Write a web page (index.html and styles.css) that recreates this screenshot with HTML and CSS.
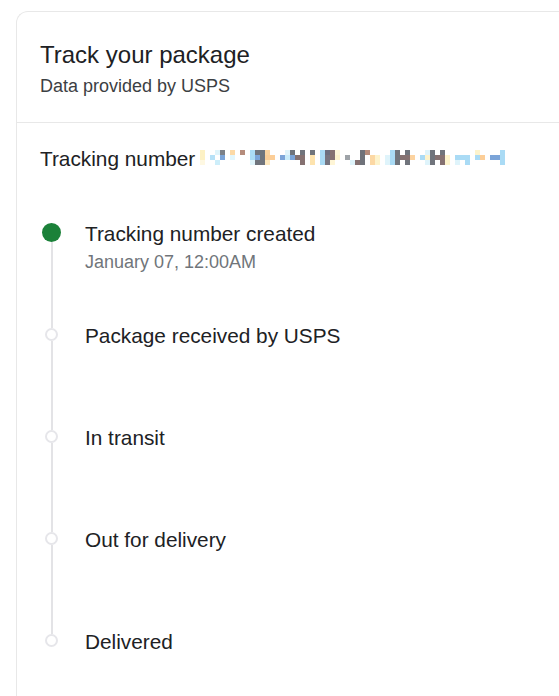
FILE: index.html
```html
<!DOCTYPE html>
<html lang="en">
<head>
<meta charset="utf-8">
<title>Track your package</title>
<link rel="stylesheet" href="styles.css">
</head>
<body>
<div class="card">
  <div class="card-header">
    <h1 class="title">Track your package</h1>
    <p class="subtitle">Data provided by USPS</p>
  </div>
  <div class="card-body">
    <div class="tracking">Tracking number<svg class="redacted" width="310" height="15" viewBox="0 0 310 15" aria-hidden="true">
      <g>
        <rect x="1" y="0" width="5" height="10" fill="#fdf1c4"/>
        <rect x="1" y="10" width="5" height="5" fill="#fef8e2"/>
        <rect x="11" y="5" width="5" height="5" fill="#b6e1f7"/>
        <rect x="16" y="0" width="5" height="5" fill="#dff4fb"/>
        <rect x="16" y="10" width="5" height="5" fill="#cdeefa"/>
        <rect x="21" y="0" width="5" height="5" fill="#7b8088"/>
        <rect x="21" y="5" width="5" height="5" fill="#7ba4d8"/>
        <rect x="31" y="0" width="5" height="5" fill="#fcd9a6"/>
        <rect x="31" y="5" width="5" height="5" fill="#e2f6fc"/>
        <rect x="41" y="0" width="5" height="5" fill="#b58c7c"/>
        <rect x="51" y="0" width="5" height="5" fill="#aadbf5"/>
        <rect x="51" y="5" width="5" height="5" fill="#aadbf5"/>
        <rect x="51" y="10" width="5" height="5" fill="#dff4fb"/>
        <rect x="56" y="0" width="10" height="5" fill="#70747c"/>
        <rect x="56" y="5" width="5" height="5" fill="#7ba4d8"/>
        <rect x="61" y="5" width="5" height="5" fill="#70747c"/>
        <rect x="56" y="10" width="10" height="5" fill="#70747c"/>
        <rect x="66" y="0" width="5" height="5" fill="#fcd3a0"/>
        <rect x="66" y="5" width="10" height="5" fill="#fcce98"/>
        <rect x="66" y="10" width="5" height="5" fill="#fde8bf"/>
        <rect x="81" y="5" width="5" height="5" fill="#7ba4d8"/>
        <rect x="86" y="0" width="5" height="5" fill="#dff4fb"/>
        <rect x="86" y="5" width="5" height="5" fill="#c9ecfa"/>
        <rect x="91" y="0" width="5" height="5" fill="#70747c"/>
        <rect x="91" y="5" width="5" height="5" fill="#7ba4d8"/>
        <rect x="96" y="5" width="5" height="5" fill="#857171"/>
        <rect x="101" y="0" width="5" height="5" fill="#70747c"/>
        <rect x="101" y="5" width="5" height="10" fill="#857171"/>
        <rect x="111" y="0" width="5" height="5" fill="#70747c"/>
        <rect x="111" y="5" width="5" height="10" fill="#fde3ae"/>
        <rect x="121" y="0" width="5" height="5" fill="#aadbf5"/>
        <rect x="121" y="5" width="5" height="10" fill="#aadbf5"/>
        <rect x="126" y="0" width="5" height="5" fill="#6d6f7f"/>
        <rect x="126" y="5" width="5" height="10" fill="#777580"/>
        <rect x="131" y="0" width="5" height="10" fill="#857171"/>
        <rect x="131" y="10" width="5" height="5" fill="#fef5d6"/>
        <rect x="136" y="0" width="5" height="5" fill="#fdf6d9"/>
        <rect x="136" y="5" width="5" height="5" fill="#fdf3cc"/>
        <rect x="146" y="5" width="5" height="5" fill="#9ea3a8"/>
        <rect x="151" y="10" width="5" height="5" fill="#dff4fb"/>
        <rect x="156" y="10" width="5" height="5" fill="#857171"/>
        <rect x="161" y="0" width="5" height="5" fill="#6f727a"/>
        <rect x="166" y="0" width="5" height="5" fill="#b58c7c"/>
        <rect x="161" y="5" width="5" height="10" fill="#6f727a"/>
        <rect x="171" y="5" width="5" height="10" fill="#fcd8a4"/>
        <rect x="176" y="5" width="5" height="10" fill="#fdf3cc"/>
        <rect x="186" y="5" width="5" height="10" fill="#dff4fb"/>
        <rect x="191" y="0" width="5" height="5" fill="#aadbf5"/>
        <rect x="191" y="5" width="5" height="10" fill="#aadbf5"/>
        <rect x="196" y="0" width="5" height="15" fill="#70747c"/>
        <rect x="201" y="5" width="10" height="5" fill="#857171"/>
        <rect x="206" y="0" width="5" height="5" fill="#70747c"/>
        <rect x="206" y="10" width="5" height="5" fill="#70747c"/>
        <rect x="211" y="5" width="5" height="5" fill="#fcd3a0"/>
        <rect x="221" y="5" width="5" height="5" fill="#aadbf5"/>
        <rect x="226" y="0" width="5" height="5" fill="#dff4fb"/>
        <rect x="226" y="5" width="5" height="5" fill="#fdf3cc"/>
        <rect x="226" y="10" width="5" height="5" fill="#dff4fb"/>
        <rect x="231" y="0" width="5" height="15" fill="#70747c"/>
        <rect x="236" y="5" width="10" height="5" fill="#857171"/>
        <rect x="241" y="0" width="5" height="5" fill="#70747c"/>
        <rect x="241" y="10" width="5" height="5" fill="#857171"/>
        <rect x="246" y="5" width="5" height="10" fill="#fdf3cc"/>
        <rect x="256" y="5" width="5" height="5" fill="#aadbf5"/>
        <rect x="256" y="10" width="5" height="5" fill="#dff4fb"/>
        <rect x="261" y="5" width="5" height="5" fill="#aadbf5"/>
        <rect x="266" y="5" width="5" height="10" fill="#aadbf5"/>
        <rect x="276" y="0" width="5" height="5" fill="#fdf3cc"/>
        <rect x="276" y="5" width="5" height="5" fill="#aadbf5"/>
        <rect x="281" y="5" width="5" height="5" fill="#fcce98"/>
        <rect x="291" y="5" width="10" height="5" fill="#7ba4d8"/>
        <rect x="301" y="0" width="5" height="15" fill="#aadbf5"/>
      </g>
    </svg></div>

    <ol class="timeline">
      <li class="step step-done">
        <div class="marker">
          <span class="seg seg-top"></span>
          <span class="dot"></span>
          <span class="seg seg-bottom"></span>
        </div>
        <div class="step-text">
          <div class="step-label">Tracking number created</div>
          <div class="step-date">January 07, 12:00AM</div>
        </div>
      </li>
      <li class="step">
        <div class="marker">
          <span class="seg seg-top"></span>
          <span class="ring"></span>
          <span class="seg seg-bottom"></span>
        </div>
        <div class="step-text">
          <div class="step-label">Package received by USPS</div>
        </div>
      </li>
      <li class="step">
        <div class="marker">
          <span class="seg seg-top"></span>
          <span class="ring"></span>
          <span class="seg seg-bottom"></span>
        </div>
        <div class="step-text">
          <div class="step-label">In transit</div>
        </div>
      </li>
      <li class="step">
        <div class="marker">
          <span class="seg seg-top"></span>
          <span class="ring"></span>
          <span class="seg seg-bottom"></span>
        </div>
        <div class="step-text">
          <div class="step-label">Out for delivery</div>
        </div>
      </li>
      <li class="step step-last">
        <div class="marker">
          <span class="seg seg-top"></span>
          <span class="ring"></span>
        </div>
        <div class="step-text">
          <div class="step-label">Delivered</div>
        </div>
      </li>
    </ol>
  </div>
</div>
</body>
</html>
```
FILE: styles.css
```css
html, body {
  margin: 0;
  padding: 0;
  height: 100%;
  overflow: hidden;
  background: #ffffff;
}

body {
  font-family: "Liberation Sans", Arial, sans-serif;
  color: #202124;
  padding: 11px 0 0 16px;
  box-sizing: border-box;
  display: flex;
  flex-direction: column;
}

.card {
  flex: 1;
  border-top: 1px solid #e8e8e8;
  border-left: 1px solid #e8e8e8;
  border-top-left-radius: 12px;
  background: #ffffff;
}

.card-header {
  padding: 27px 24px 24px 23px;
  border-bottom: 1px solid #e8e8e8;
}

.title {
  margin: 0;
  font-size: 24px;
  line-height: 32px;
  font-weight: 400;
  color: #202124;
}

.subtitle {
  margin: 3px 0 0;
  font-size: 18px;
  line-height: 24px;
  color: #3c4043;
}

.card-body {
  padding: 22px 0 0 23px;
}

.tracking {
  font-size: 20.8px;
  line-height: 28px;
  color: #202124;
  white-space: nowrap;
}

.redacted {
  margin-left: 4px;
  vertical-align: 1px;
}

.timeline {
  list-style: none;
  margin: 47px 0 0;
  padding: 0;
}

.step {
  display: flex;
  gap: 22px;
  height: 102px;
}

.step-last {
  height: auto;
}

.marker {
  width: 23px;
  display: flex;
  flex-direction: column;
  align-items: center;
  flex-shrink: 0;
}

.seg {
  width: 2px;
  background: #e3e3e6;
}

.seg-top {
  height: 6px;
}

.seg-bottom {
  flex: 1;
}

.step-done .seg-top {
  height: 3px;
  background: transparent;
}

.dot {
  width: 19px;
  height: 19px;
  border-radius: 50%;
  background: #1b8139;
  flex-shrink: 0;
}

.ring {
  width: 13px;
  height: 13px;
  border-radius: 50%;
  border: 2px solid #e6e6ea;
  box-sizing: border-box;
  background: #ffffff;
  flex-shrink: 0;
}

.step-text {
  display: flex;
  flex-direction: column;
}

.step-label {
  font-size: 20.8px;
  line-height: 28px;
  color: #202124;
}

.step-date {
  margin-top: 2px;
  font-size: 18px;
  line-height: 24px;
  color: #70757a;
}
```
